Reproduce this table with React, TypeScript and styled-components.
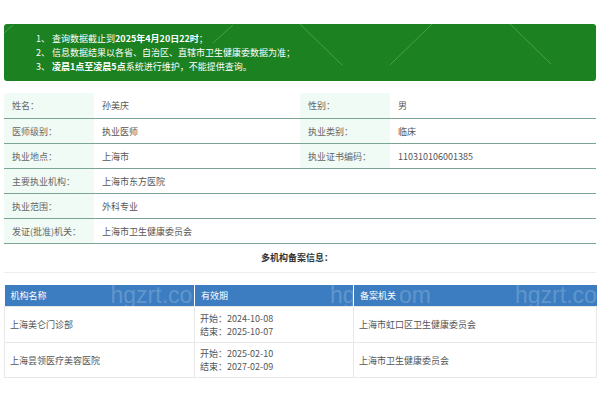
import React from "react";
import styled, { createGlobalStyle } from "styled-components";

const GlobalStyle = createGlobalStyle`
  html, body { margin: 0; padding: 0; background: #fff; }
  body {
    font-family: "Noto Sans CJK SC", "Noto Sans", sans-serif;
    font-size: 9px;
    color: #555;
  }
  * { box-sizing: border-box; }
`;

const Page = styled.div`
  width: 600px;
  padding: 24px 4px 0;
`;

const Notice = styled.div`
  position: relative;
  overflow: hidden;
  background: #1b8121;
  border-radius: 3px;
  color: #fff;
  font-size: 9px;
  line-height: 14px;
  padding: 8px 12px 7px 32px;
  height: 57px;
`;

const NoticeLine = styled.p`
  position: relative;
  margin: 0;
  white-space: nowrap;
`;

const NoticeDecor = styled.svg`
  position: absolute;
  inset: 0;
  width: 100%;
  height: 100%;
  pointer-events: none;
`;

const InfoTable = styled.div`
  margin-top: 12px;
`;

const InfoRow = styled.div<{ $full?: boolean; $first?: boolean }>`
  display: grid;
  grid-template-columns: ${(p) => (p.$full ? "90px 1fr" : "90px 206px 90px 1fr")};
  height: ${(p) => (p.$first ? "26px" : "25px")};
  border-bottom: 1px solid #7ba591;
`;

const Label = styled.div`
  display: flex;
  align-items: center;
  padding-left: 8px;
  background: #f1fbf5;
  color: #666;
`;

const Value = styled.div`
  display: flex;
  align-items: center;
  padding-left: 8px;
  color: #555;
`;

const SectionTitle = styled.div`
  height: 29px;
  line-height: 28px;
  text-align: center;
  font-weight: bold;
  color: #333;
  border-bottom: 1px solid #eeeeee;
  padding-right: 6px;
`;

const OrgTable = styled.table`
  margin-top: 12px;
  width: 100%;
  border-collapse: collapse;
  table-layout: fixed;
`;

const HeadCell = styled.th<{ $w: number }>`
  position: relative;
  overflow: hidden;
  width: ${(p) => p.$w}px;
  height: 21px;
  padding: 0;
  background: #3c7dc1;
  color: #fff;
  font-weight: normal;
  text-align: left;
  border-left: 1px solid rgba(255, 255, 255, 0.55);
  &:first-child { border-left: none; }
`;

const HeadLabel = styled.span`
  position: relative;
  z-index: 1;
  display: inline-block;
  line-height: 21px;
  padding: 0 4px 0 6px;
  background: #3c7dc1;
`;

const Watermark = styled.span`
  position: absolute;
  top: -2px;
  font-family: "Liberation Sans", Arial, sans-serif;
  font-size: 23px;
  line-height: 24px;
  color: rgba(255, 255, 255, 0.2);
  white-space: nowrap;
  pointer-events: none;
`;

const BodyCell = styled.td<{ $h: number }>`
  height: ${(p) => p.$h}px;
  padding: 0 5px;
  border: 1px solid #e8e8e8;
  color: #555;
  line-height: 13px;
  vertical-align: middle;
`;

const DateLine = styled.div`
  white-space: nowrap;
`;

const infoPairs = [
  ["姓名：", "孙美庆", "性别：", "男"],
  ["医师级别：", "执业医师", "执业类别：", "临床"],
  ["执业地点：", "上海市", "执业证书编码：", "110310106001385"],
];

const infoFull = [
  ["主要执业机构：", "上海市东方医院"],
  ["执业范围：", "外科专业"],
  ["发证(批准)机关：", "上海市卫生健康委员会"],
];

const orgs = [
  { name: "上海美仑门诊部", start: "2024-10-08", end: "2025-10-07", org: "上海市虹口区卫生健康委员会", h: 36 },
  { name: "上海昙领医疗美容医院", start: "2025-02-10", end: "2027-02-09", org: "上海市卫生健康委员会", h: 35 },
];

export default function App() {
  return (
    <>
      <GlobalStyle />
      <Page>
        <Notice>
          <NoticeDecor viewBox="0 0 592 57" preserveAspectRatio="none">
            <g stroke="rgba(255,255,255,0.22)" strokeWidth="1" fill="none">
              <line x1="296" y1="0" x2="338" y2="41" />
              <line x1="428" y1="0" x2="386" y2="41" />
              <line x1="506" y1="0" x2="547" y2="40" />
              <line x1="229" y1="1" x2="209" y2="19" />
              <line x1="9" y1="1" x2="0" y2="9" />
            </g>
          </NoticeDecor>
          <NoticeLine>
            1、 查询数据截止到<b>2025年4月20日22时</b>；
          </NoticeLine>
          <NoticeLine>2、 信息数据结果以各省、自治区、直辖市卫生健康委数据为准；</NoticeLine>
          <NoticeLine>
            3、 <b>凌晨1点至凌晨5点</b>系统进行维护，不能提供查询。
          </NoticeLine>
        </Notice>

        <InfoTable>
          {infoPairs.map((r, i) => (
            <InfoRow key={i} $first={i === 0}>
              <Label>{r[0]}</Label>
              <Value>{r[1]}</Value>
              <Label>{r[2]}</Label>
              <Value>{r[3]}</Value>
            </InfoRow>
          ))}
          {infoFull.map((r, i) => (
            <InfoRow key={"f" + i} $full>
              <Label>{r[0]}</Label>
              <Value>{r[1]}</Value>
            </InfoRow>
          ))}
        </InfoTable>

        <SectionTitle>多机构备案信息：</SectionTitle>

        <OrgTable>
          <thead>
            <tr>
              <HeadCell $w={190}>
                <Watermark style={{ left: 106 }}>hgzrt.com</Watermark>
                <HeadLabel>机构名称</HeadLabel>
              </HeadCell>
              <HeadCell $w={159}>
                <Watermark style={{ left: 135 }}>hgzrt.com</Watermark>
                <HeadLabel>有效期</HeadLabel>
              </HeadCell>
              <HeadCell $w={243}>
                <Watermark style={{ left: -24 }}>hgzrt.com</Watermark>
                <Watermark style={{ left: 161 }}>hgzrt.com</Watermark>
                <HeadLabel>备案机关</HeadLabel>
              </HeadCell>
            </tr>
          </thead>
          <tbody>
            {orgs.map((o) => (
              <tr key={o.name}>
                <BodyCell $h={o.h}>{o.name}</BodyCell>
                <BodyCell $h={o.h}>
                  <DateLine>开始：{o.start}</DateLine>
                  <DateLine>结束：{o.end}</DateLine>
                </BodyCell>
                <BodyCell $h={o.h}>{o.org}</BodyCell>
              </tr>
            ))}
          </tbody>
        </OrgTable>
      </Page>
    </>
  );
}
